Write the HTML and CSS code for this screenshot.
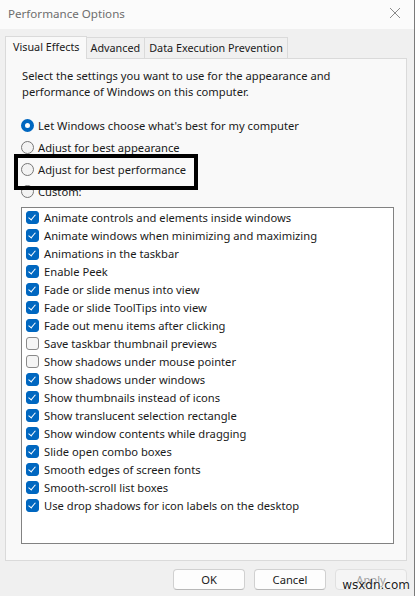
FILE: index.html
```html
<!DOCTYPE html>
<html>
<head>
<meta charset="utf-8">
<link rel="stylesheet" href="styles.css">
</head>
<body>
<div class="window">
  <div class="titlebar">
    <span class="title">Performance Options</span>
    <svg class="close" width="12" height="12" viewBox="0 0 12 12"><path d="M1 1L11 11M11 1L1 11" stroke="#8a8a8a" stroke-width="1"/></svg>
  </div>
  <div class="content">
    <div class="tabs">
      <div class="tab active">Visual Effects</div>
      <div class="tab">Advanced</div>
      <div class="tab">Data Execution Prevention</div>
    </div>
    <div class="panel">
      <p class="desc">Select the settings you want to use for the appearance and performance of Windows on this computer.</p>
      <div class="radios">
        <div class="radio-row"><span class="radio on"></span>Let Windows choose what's best for my computer</div>
        <div class="radio-row"><span class="radio"></span>Adjust for best appearance</div>
        <div class="radio-row highlight"><span class="radio"></span>Adjust for best performance</div>
        <div class="radio-row"><span class="radio"></span>Custom:</div>
      </div>
      <div class="listbox">
        <div class="item"><span class="cb on"></span>Animate controls and elements inside windows</div>
        <div class="item"><span class="cb on"></span>Animate windows when minimizing and maximizing</div>
        <div class="item"><span class="cb on"></span>Animations in the taskbar</div>
        <div class="item"><span class="cb on"></span>Enable Peek</div>
        <div class="item"><span class="cb on"></span>Fade or slide menus into view</div>
        <div class="item"><span class="cb on"></span>Fade or slide ToolTips into view</div>
        <div class="item"><span class="cb on"></span>Fade out menu items after clicking</div>
        <div class="item"><span class="cb"></span>Save taskbar thumbnail previews</div>
        <div class="item"><span class="cb"></span>Show shadows under mouse pointer</div>
        <div class="item"><span class="cb on"></span>Show shadows under windows</div>
        <div class="item"><span class="cb on"></span>Show thumbnails instead of icons</div>
        <div class="item"><span class="cb on"></span>Show translucent selection rectangle</div>
        <div class="item"><span class="cb on"></span>Show window contents while dragging</div>
        <div class="item"><span class="cb on"></span>Slide open combo boxes</div>
        <div class="item"><span class="cb on"></span>Smooth edges of screen fonts</div>
        <div class="item"><span class="cb on"></span>Smooth-scroll list boxes</div>
        <div class="item"><span class="cb on"></span>Use drop shadows for icon labels on the desktop</div>
      </div>
    </div>
    <div class="buttons">
      <div class="btn">OK</div>
      <div class="btn">Cancel</div>
      <div class="btn disabled">Apply</div>
    </div>
  </div>
  <div class="watermark">wsxdn.com</div>
</div>
</body>
</html>
```
FILE: styles.css
```css
* { box-sizing: border-box; }
html, body { margin: 0; padding: 0; }
body {
  width: 417px;
  height: 596px;
  background: #ffffff;
  font-family: "Noto Sans", "Open Sans", sans-serif;
  font-size: 11.2px;
  color: #1a1a1a;
  overflow: hidden;
}
.window {
  position: relative;
  width: 415px;
  height: 596px;
  background: #f0f0f0;
  border-right: 1px solid #7a7a7a;
}
.titlebar {
  height: 29px;
  background: #fbfbfb;
  display: flex;
  align-items: center;
  justify-content: space-between;
  padding: 0 13px 0 8px;
}
.title {
  color: #6e6e6e;
  font-size: 11.6px;
  margin-top: -2px;
}
.close { margin-top: -4px; }
.content {
  padding: 6px 7px 0 5px;
}
.tabs {
  display: flex;
  align-items: flex-end;
  height: 23px;
}
.tab {
  height: 21px;
  padding: 0 4px;
  line-height: 19px;
  font-size: 10.8px;
  border: 1px solid #dadada;
  border-bottom: none;
  background: #f0f0f0;
  margin-left: -1px;
}
.tab.active {
  height: 23px;
  background: #f9f9f9;
  margin-left: 0;
  padding: 0 6px 0 7px;
  line-height: 20px;
  position: relative;
  z-index: 1;
  margin-bottom: -1px;
}
.panel {
  background: #f9f9f9;
  border: 1px solid #dadada;
  height: 503px;
  padding: 9px 13px 0 15px;
}
.desc {
  margin: 0 0 14px 1px;
  line-height: 16px;
  width: 340px;
}
.radios { display: flex; flex-direction: column; }
.radio-row {
  display: flex;
  align-items: center;
  height: 22px;
  gap: 4px;
}
.radio-row.highlight {
  position: relative;
}
.radio-row.highlight::after {
  content: "";
  position: absolute;
  left: -7px;
  top: -4px;
  width: 176px;
  height: 28px;
  border: 4px solid #000;
}
.radio {
  width: 13px;
  height: 13px;
  border-radius: 50%;
  border: 1px solid #777;
  background: #f3f3f3;
  flex: none;
}
.radio.on {
  border: 4px solid #0067c0;
  background: #fff;
}
.listbox {
  margin-top: 5px;
  height: 337px;
  width: 373px;
  background: #fff;
  border: 1px solid #828282;
  padding: 0 0 0 4px;
}
.item {
  display: flex;
  align-items: center;
  height: 18px;
  gap: 5px;
}
.cb {
  width: 13px;
  height: 13px;
  border-radius: 3px;
  border: 1px solid #8a8a8a;
  background: #f5f5f5;
  flex: none;
  position: relative;
}
.cb.on {
  background: #0067c0;
  border-color: #0067c0;
}
.cb.on::after {
  content: "";
  position: absolute;
  left: 3px;
  top: 1px;
  width: 3px;
  height: 6px;
  border-right: 1px solid #fff;
  border-bottom: 1px solid #fff;
  transform: rotate(40deg);
}
.buttons {
  display: flex;
  justify-content: flex-end;
  gap: 9px;
  margin-top: 8px;
}
.btn {
  width: 72px;
  height: 21px;
  border: 1px solid #d0d0d0;
  border-bottom-color: #b8b8b8;
  border-radius: 4px;
  background: #fdfdfd;
  text-align: center;
  line-height: 19px;
}
.btn.disabled {
  color: #a0a0a0;
  background: #f5f5f5;
  border-color: #e0e0e0;
}
.watermark {
  position: absolute;
  right: 4px;
  bottom: 4px;
  font-family: "DejaVu Sans", sans-serif;
  font-size: 12px;
  color: #222;
  text-shadow: 0 0 2px #fff, 0 0 2px #fff;
}
```
